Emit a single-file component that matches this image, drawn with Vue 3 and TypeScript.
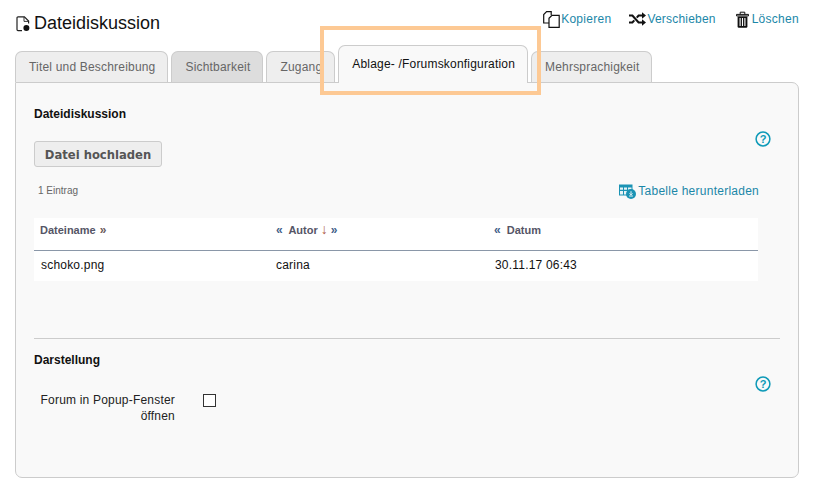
<script setup lang="ts">
interface Tab { label: string; active?: boolean; muted?: boolean }
const tabs: Tab[] = [
  { label: 'Titel und Beschreibung' },
  { label: 'Sichtbarkeit', muted: true },
  { label: 'Zugang' },
  { label: 'Ablage- /Forumskonfiguration', active: true },
  { label: 'Mehrsprachigkeit' },
]
</script>

<template>
  <div class="page">
    <header class="head">
      <h1 class="title">
        <svg class="title-icon" width="14" height="16" viewBox="0 0 14 16">
          <path d="M6 14.6H2a1 1 0 0 1-1-1V1.8a1 1 0 0 1 1-1h6.4L12.6 5v2.6" fill="none" stroke="#222" stroke-width="1.2" />
          <path d="M8 1v4.4h4.4" fill="none" stroke="#222" stroke-width=".9" />
          <circle cx="10.4" cy="12" r="3" fill="#111" />
        </svg>
        Dateidiskussion
      </h1>
      <nav class="actions">
        <a class="action copy">
          <svg width="17" height="17" viewBox="0 0 17 17">
            <path d="M6 12H.7V3.6L3.6.7h4.6v3.6" fill="none" stroke="#111" stroke-width="1.2" />
            <path d="M6 7.2 9 4.3h7.2v12H6z" fill="#fff" stroke="#111" stroke-width="1.2" />
          </svg>
          Kopieren
        </a>
        <a class="action move">
          <svg width="17" height="14" viewBox="0 0 17 14">
            <path d="M0 3.5h3.4l6.2 7H14M0 10.5h3.4l1.9-2.1M7.8 5.6l1.8-2.1H14" fill="none" stroke="#111" stroke-width="2.1" />
            <path d="M13 .2 17 3.5l-4 3.3zM13 7.2l4 3.3-4 3.3z" fill="#111" />
          </svg>
          Verschieben
        </a>
        <a class="action del">
          <svg width="13" height="17" viewBox="0 0 13 17">
            <path d="M.5 3.4h12v1.5H.5zM4.2 3.4V1.2h4.6v2.2" fill="#fff" stroke="#111" stroke-width="1" />
            <path d="M1.6 5.4h9.8v10.1a1.2 1.2 0 0 1-1.2 1.2H2.8a1.2 1.2 0 0 1-1.2-1.2z" fill="#111" />
            <path d="M4.1 7v8M6.5 7v8M8.9 7v8" stroke="#fff" stroke-width="1.1" />
          </svg>
          Löschen
        </a>
      </nav>
    </header>

    <div class="tabs">
      <div
        v-for="t in tabs"
        :key="t.label"
        class="tab"
        :class="{ active: t.active, muted: t.muted }"
      >{{ t.label }}</div>
    </div>

    <main class="panel">
      <section class="upper">
        <div class="section-head">
          <h2>Dateidiskussion</h2>
          <svg class="help help-top" width="16" height="16" viewBox="0 0 16 16">
            <circle cx="8" cy="8" r="6.9" fill="none" stroke="#0e9ab8" stroke-width="1.5" />
            <text x="8" y="11.8" text-anchor="middle" class="q">?</text>
          </svg>
        </div>
        <button class="upload">Datei hochladen</button>
        <div class="meta">
          <span class="count">1 Eintrag</span>
          <a class="download">
            <svg width="17" height="15" viewBox="0 0 17 15">
              <path d="M0 .5h13.5v11H0z" fill="#1b93b4" />
              <path d="M1 3.6h3v2.2H1zM5 3.6h3v2.2H5zM9 3.6h3.5v2.2H9zM1 7h3v3.4H1zM5 7h3v3.4H5z" fill="#e8f3f6" />
              <circle cx="12" cy="10" r="5" fill="#1b93b4" />
              <path d="M12 7.2v3.4M10.5 9.4l1.5 1.5 1.5-1.5M10.1 12h3.8" fill="none" stroke="#fff" stroke-width=".9" />
            </svg>
            Tabelle herunterladen
          </a>
        </div>
        <table class="grid">
          <thead>
            <tr>
              <th class="c1">Dateiname <span class="arr">»</span></th>
              <th class="c2"><span class="arr">«</span>&nbsp; Autor <span class="down">↓</span> <span class="arr">»</span></th>
              <th class="c3"><span class="arr">«</span>&nbsp; Datum</th>
            </tr>
          </thead>
          <tbody>
            <tr>
              <td class="c1">schoko.png</td>
              <td class="c2">carina</td>
              <td class="c3">30.11.17 06:43</td>
            </tr>
          </tbody>
        </table>
      </section>

      <section class="lower">
        <div class="section-head">
          <h2>Darstellung</h2>
          <svg class="help help-bottom" width="16" height="16" viewBox="0 0 16 16">
            <circle cx="8" cy="8" r="6.9" fill="none" stroke="#0e9ab8" stroke-width="1.5" />
            <text x="8" y="11.8" text-anchor="middle" class="q">?</text>
          </svg>
        </div>
        <div class="field">
          <label class="field-label" for="popup">Forum in Popup-Fenster öffnen</label>
          <input id="popup" class="check" type="checkbox" />
        </div>
      </section>
    </main>

    <div class="highlight"></div>
  </div>
</template>

<style>
html, body { margin: 0; background: #fff; }
</style>

<style scoped>
.page {
  position: relative;
  width: 817px;
  height: 491px;
  box-sizing: border-box;
  padding: 0 18px 0 15px;
  font-family: "Liberation Sans", Arial, sans-serif;
  font-size: 12px;
  color: #111;
  overflow: hidden;
}
.head { display: flex; justify-content: space-between; height: 51px; }
.title {
  margin: 14px 0 0 1px;
  display: flex;
  align-items: center;
  gap: 4px;
  height: 18px;
  font-size: 18px;
  font-weight: 400;
  color: #111;
}
.title-icon { margin-top: 1px; }
.actions { display: flex; gap: 18px; padding: 11px 0 0; height: 16px; }
.action {
  display: flex;
  align-items: center;
  gap: 1px;
  color: #1b87a8;
  letter-spacing: .28px;
}
.move { letter-spacing: .2px; }
.del { gap: 3px; margin-left: 2px; }
.tabs { display: flex; gap: 3px; height: 31px; align-items: flex-end; position: relative; z-index: 1; }
.tab {
  box-sizing: border-box;
  height: 31px;
  padding: 0 12px 0 13px;
  line-height: 30px;
  border: 1px solid #ccc;
  border-bottom: 0;
  border-radius: 7px 7px 0 0;
  background: #eee;
  color: #666;
  letter-spacing: .19px;
  white-space: nowrap;
}
.tab.muted { background: #ddd; }
.tab.active {
  height: 38px;
  margin-bottom: -1px;
  line-height: 36px;
  background: #f9f9f9;
  color: #111;
}
.panel {
  box-sizing: border-box;
  height: 396px;
  border: 1px solid #ccc;
  border-radius: 0 7px 7px 7px;
  background: #f9f9f9;
  padding: 0 18px;
}
.upper { height: 255px; border-bottom: 1px solid #ccc; }
.section-head { position: relative; }
h2 {
  margin: 0;
  padding-top: 24px;
  font-size: 12px;
  line-height: 14px;
  font-weight: 700;
  color: #111;
}
.help { position: absolute; right: 9px; }
.help-top { top: 48px; }
.help-bottom { top: 37px; }
.q { font: 700 11px "Liberation Sans", Arial, sans-serif; fill: #0e9ab8; }
.upload {
  display: block;
  box-sizing: border-box;
  margin-top: 20px;
  width: 128px;
  height: 26px;
  padding: 1px 0 0;
  border: 1px solid #ccc;
  border-radius: 3px;
  background: #eee;
  color: #555;
  font-family: "DejaVu Sans", sans-serif;
  font-size: 11.6px;
  font-weight: 700;
}
.meta {
  display: flex;
  justify-content: space-between;
  align-items: center;
  margin-top: 15px;
  width: 725px;
  height: 18px;
}
.count { font-size: 10px; color: #666; padding: 0 0 2px 4px; }
.download { display: flex; align-items: center; gap: 2px; color: #1b87a8; letter-spacing: .25px; }
.grid {
  width: 724px;
  margin-top: 18px;
  border-collapse: separate;
  border-spacing: 0;
  background: #fff;
  table-layout: fixed;
}
th {
  box-sizing: border-box;
  height: 33px;
  padding: 0 0 9px;
  text-align: left;
  font-size: 11px;
  font-weight: 700;
  color: #555566;
  border-bottom: 1px solid #8a97a8;
}
td { height: 30px; padding: 0 0 2px; color: #111; letter-spacing: .2px; box-sizing: border-box; }
th.c1 { width: 242px; padding-left: 6px; }
td.c1 { padding-left: 7px; }
th.c2 { width: 218px; }
td.c3 { padding-left: 1px; }
.arr { color: #3f6088; font-size: 12px; }
.c1 .arr { color: #6b5a5a; margin-left: 1px; }
.down { color: #b0604a; font-size: 14px; font-weight: 400; line-height: 10px; }
.lower { position: relative; }
.lower h2 { padding-top: 14px; }
.field { display: flex; align-items: flex-start; margin-top: 25px; }
.field-label {
  width: 141px;
  text-align: right;
  line-height: 16px;
  color: #222;
  letter-spacing: .2px;
}
.check {
  appearance: none;
  box-sizing: border-box;
  width: 13px;
  height: 13px;
  margin: 2px 0 0 28px;
  border: 1px solid #333;
  background: #fff;
}
.highlight {
  position: absolute;
  left: 320px;
  top: 26px;
  width: 221px;
  height: 69px;
  box-sizing: border-box;
  border: 4px solid #fdc994;
  z-index: 2;
  pointer-events: none;
}
</style>
